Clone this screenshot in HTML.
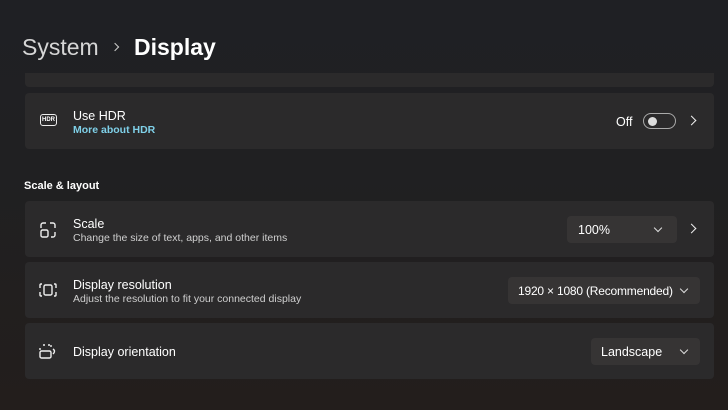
<!DOCTYPE html>
<html><head><style>
body{margin:0;width:728px;height:410px;overflow:hidden;background:linear-gradient(180deg,#1f2024 0%,#202022 40%,#231e1c 100%);font-family:"Liberation Sans",sans-serif;color:#fff;position:relative}
.a{position:absolute}
.card{position:absolute;left:25px;width:689px;background:#2b2a2b;border-radius:4px}
.t{font-size:12.5px;color:#fff}
.s{font-size:10.5px;color:#cfcfcf}
.dd{position:absolute;background:#363434;border-radius:4px;font-size:12.5px}
.chev{position:absolute;width:5px;height:5px;border-right:1.2px solid #ddd;border-bottom:1.2px solid #ddd;transform:rotate(45deg)}
.arr{position:absolute;width:6px;height:6px;border-right:1.5px solid #eee;border-top:1.5px solid #eee;transform:rotate(45deg)}
</style></head><body>
<div class="a" style="left:22px;top:34px;font-size:23px;color:#d6d6d6">System</div>
<div class="a" style="left:112px;top:44px;width:5px;height:5px;border-right:1.5px solid #ccc;border-top:1.5px solid #ccc;transform:rotate(45deg)"></div>
<div class="a" style="left:134px;top:34px;font-size:23px;font-weight:bold">Display</div>

<div class="card" style="top:73px;height:14px;border-radius:0 0 4px 4px"></div>
<div class="card" style="top:93px;height:56px">
  <div class="a" style="left:15px;top:21px;width:15px;height:10px;border:1.3px solid #eee;border-radius:3px;font-size:6px;font-weight:bold;line-height:10px;text-align:center">HDR</div>
  <div class="a t" style="left:48px;top:16px">Use HDR</div>
  <div class="a" style="left:48px;top:31px;font-size:10.5px;font-weight:bold;color:#7fd0e8">More about HDR</div>
  <div class="a t" style="left:591px;top:22px">Off</div>
  <div class="a" style="left:618px;top:20px;width:31px;height:14px;border:1.3px solid #aaa;border-radius:9px"></div>
  <div class="a" style="left:623px;top:24px;width:9px;height:9px;border-radius:50%;background:#ddd"></div>
  <div class="arr" style="left:663px;top:24px"></div>
</div>

<div class="a" style="left:24px;top:180px;font-size:11px;font-weight:bold">Scale &amp; layout</div>

<div class="card" style="top:201px;height:56px">
  <svg class="a" style="left:15px;top:21px" width="16" height="16" viewBox="0 0 16 16" fill="none" stroke="#eee" stroke-width="1.4"><path d="M1 6V3a2 2 0 0 1 2-2h3M10 1h3a2 2 0 0 1 2 2v3M15 10v3a2 2 0 0 1-2 2h-2"/><rect x="1" y="8" width="7" height="7" rx="1.5"/></svg>
  <div class="a t" style="left:48px;top:16px">Scale</div>
  <div class="a s" style="left:48px;top:31px">Change the size of text, apps, and other items</div>
  <div class="dd" style="left:542px;top:15px;width:110px;height:27px"><span class="a" style="left:11px;top:7px">100%</span><div class="chev" style="left:88px;top:9px"></div></div>
  <div class="arr" style="left:663px;top:24px"></div>
</div>
<div class="card" style="top:262px;height:56px">
  <svg class="a" style="left:14px;top:21px" width="18" height="14" viewBox="0 0 18 14" fill="none" stroke="#eee" stroke-width="1.4"><path d="M3 1H2a1 1 0 0 0-1 1v3M1 9v3a1 1 0 0 0 1 1h1M15 1h1a1 1 0 0 1 1 1v3M17 9v3a1 1 0 0 1-1 1h-1"/><rect x="5" y="2" width="8" height="10" rx="1.5"/></svg>
  <div class="a t" style="left:48px;top:16px">Display resolution</div>
  <div class="a s" style="left:48px;top:31px">Adjust the resolution to fit your connected display</div>
  <div class="dd" style="left:483px;top:15px;width:192px;height:27px"><span class="a" style="left:10px;top:7px;font-size:12px;letter-spacing:-0.2px">1920 × 1080 (Recommended)</span><div class="chev" style="left:173px;top:9px"></div></div>
</div>
<div class="card" style="top:323px;height:56px">
  <svg class="a" style="left:14px;top:21px" width="18" height="15" viewBox="0 0 18 15" fill="none" stroke="#eee" stroke-width="1.4"><path d="M1 6V2M4 1h2M9 1h2M12 1v3" stroke-dasharray="2 2"/><rect x="1" y="7" width="11" height="7" rx="1.5"/><path d="M14 5q3 2 0 5"/></svg>
  <div class="a t" style="left:48px;top:22px">Display orientation</div>
  <div class="dd" style="left:566px;top:15px;width:109px;height:27px"><span class="a" style="left:10px;top:7px">Landscape</span><div class="chev" style="left:90px;top:9px"></div></div>
</div>
</body></html>
